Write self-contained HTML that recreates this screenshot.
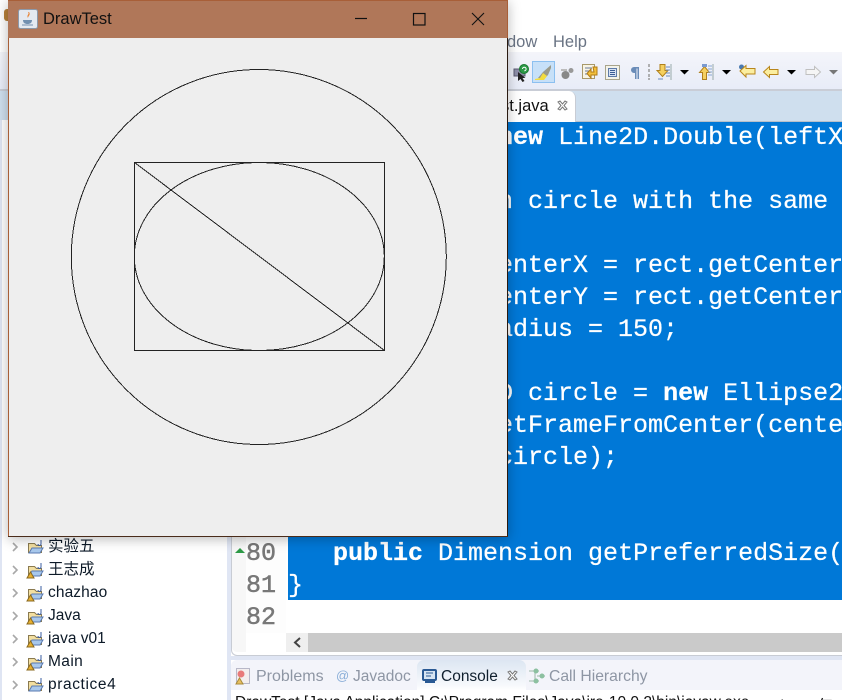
<!DOCTYPE html>
<html><head><meta charset="utf-8"><style>
html,body{margin:0;padding:0;width:842px;height:700px;overflow:hidden;background:#fff}
*{box-sizing:border-box}
.a{position:absolute}
.t{position:absolute;white-space:pre;font-family:"Liberation Sans","Noto Sans CJK SC",sans-serif}
.c{position:absolute;left:288px;white-space:pre;color:#fff;font:25px/32px "Liberation Mono",monospace;-webkit-text-stroke:.25px #fff}
.c b{font-weight:bold}
.n{position:absolute;left:246px;color:#787878;font:25px/32px "Liberation Mono",monospace;white-space:pre;-webkit-text-stroke:.5px #787878}
.tree{font-size:15.500px;color:#0d1a28;left:48px;line-height:20px}
</style></head><body>
<div class="a" style="left:0;top:0;width:842px;height:700px;background:#fff;overflow:hidden">
<!-- menu / toolbar -->
<div class="t" style="left:507px;top:33px;font-size:16.500px;color:#6a7484">dow</div>
<div class="t" style="left:553px;top:33px;font-size:16.500px;color:#6a7484">Help</div>
<div class="a" style="left:0;top:52px;width:842px;height:39px;background:linear-gradient(#f4f5fa,#e8ecf8);border-bottom:2px solid #c9cdd6"></div>
<div class="a" style="left:0;top:91px;width:842px;height:31px;background:#cfdfee;border-bottom:1px solid #b8c0ca"></div>
<div class="a" style="left:0;top:120px;width:2px;height:580px;background:#dfe5f3"></div>
<div class="a" style="left:2px;top:120px;width:225px;height:580px;background:#fff"></div>
<div class="a" style="left:227px;top:122px;width:4px;height:578px;background:#e0e6f4"></div>

<!-- toolbar icons -->
<svg class="a" style="left:0;top:0" width="842" height="92" viewBox="0 0 842 92">
<!-- green run icon -->
<path d="M514 69h11v7h-11z" fill="#8d8ea8" stroke="#5a5a70"/><path d="M518 72v9l2.500-2 2 3 2-1-2-3h3z" fill="#222"/><circle cx="524" cy="69" r="4.500" fill="#2c9a48" stroke="#1a7a30"/><path d="M522.500 69a1.800 1.800 0 1 1 1.800 1.800" fill="none" stroke="#fff"/>
<!-- highlighter -->
<rect x="532.500" y="61.500" width="22" height="21" fill="#c7e0f8" stroke="#8cc0f0"/><path d="M551 65l-8 7-5 6 6 1 4-4 3-7z" fill="#9a9a8a"/><path d="M535 79l5-1 3-5 4 3-3 4-9 0z" fill="#f2dc3e"/>
<!-- dots -->
<circle cx="565.500" cy="75" r="4" fill="#888"/><circle cx="571" cy="70.500" r="2.500" fill="#999"/><path d="M561 70h6" stroke="#bbb" stroke-width="2"/>
<!-- doc with return arrow -->
<rect x="582.500" y="64.500" width="12" height="14" fill="#f8f4e4" stroke="#a8996a"/><path d="M585 68h7M585 71h5M585 74h3" stroke="#6a7a9a"/><path d="M593 67h4v8h-6v3l-4-4.500 4-4.500v3h3z" fill="#f2c03c" stroke="#b07a14"/>
<!-- block -->
<rect x="605.500" y="65.500" width="14" height="14" fill="#f3f3ea" stroke="#a8a48c"/><path d="M608.500 68.500h8v8h-8z" fill="#d6e2f4" stroke="#5d7aa8"/><path d="M610 70.500h5M610 72.500h5M610 74.500h5" stroke="#3a5c94"/>
<!-- pilcrow -->
<path d="M639 67h-5a3 3 0 0 0 0 6h1v6h1.500V68.500h1V79h1.500z" fill="#6a8cb8"/>
<path d="M649 64v3M649 69v3M649 74v3M649 78v2" stroke="#999" stroke-width="1.500"/>
<!-- next annotation -->
<path d="M660 64.500h5v6h3l-5.500 6-5.500-6h3z" fill="#f5d060" stroke="#b0801c"/><path d="M658 79h5M666 67h4M666 70h4M666 73h4M666 76h4" stroke="#6a8cc0"/><path d="M671 64v16" stroke="#9aa"/>
<path d="M680 70h9l-4.500 4.500z" fill="#000"/>
<!-- prev annotation -->
<path d="M702.500 79.500v-7h-3l5-6 5 6h-3v7z" fill="#f5d060" stroke="#b0801c"/><path d="M702 64h5v3h-5z" fill="#7a9ad0"/><path d="M708 66h4M708 69h4M708 72h4M708 75h4" stroke="#8aa8d4"/><path d="M713 64v16" stroke="#9aa"/>
<path d="M722 70h9l-4.500 4.500z" fill="#000"/>
<!-- last edit -->
<circle cx="741.500" cy="67" r="2.500" fill="#4a7ab0"/><path d="M740 71l6-5.500v3h9v5.500h-9v3z" fill="#fbeea0" stroke="#b8861c"/>
<!-- back -->
<path d="M763.500 72l6-5.500v3h8.500v5h-8.500v3z" fill="#fbeea0" stroke="#b8861c"/>
<path d="M787 70h9l-4.500 4.500z" fill="#000"/>
<!-- forward -->
<path d="M820.500 72l-6-5.500v3H806v5h8.500v3z" fill="#f5f5f5" stroke="#c0c0c0"/>
<path d="M829 70h9l-4.500 4.500z" fill="#777"/>
</svg>
<!-- Tab -->
<div class="a" style="left:480px;top:91px;width:96px;height:31px;background:#fff;border-top-right-radius:7px;border-right:1px solid #c8ccd4"></div>
<div class="t" style="left:501px;top:97px;font-size:16.500px;color:#111">st.java</div>
<svg class="a" style="left:557px;top:100px" width="11" height="11"><path d="M1 2l2-1 2.500 3L8 1l2 1-3 3.500L10 9l-2 1-2.500-3L3 10 1 9l3-3.500z" fill="#fff" stroke="#777"/></svg>

<!-- Editor -->
<div class="a" style="left:231px;top:122px;width:611px;height:534px;background:#fff;border-left:1px solid #c8ccd4;border-bottom:1px solid #c8ccd4;border-bottom-left-radius:6px"></div>
<div class="a" style="left:232px;top:122px;width:14px;height:530px;background:#f7f7f7;border-bottom-left-radius:5px"></div>
<div class="a" style="left:246px;top:122px;width:40px;height:511px;background:#fdfdfd"></div>
<div class="a" style="left:288px;top:122px;width:554px;height:478px;background:#0078d7"></div>
<div class="c" style="top:122px"><span>              </span><b>new</b> Line2D.Double(leftX</div>
<div class="c" style="top:186px">              n circle with the same</div>
<div class="c" style="top:250px">             centerX = rect.getCenter</div>
<div class="c" style="top:282px">             centerY = rect.getCenter</div>
<div class="c" style="top:314px">              adius = 150;</div>
<div class="c" style="top:378px">              D circle = <b>new</b> Ellipse2</div>
<div class="c" style="top:410px">             setFrameFromCenter(cente</div>
<div class="c" style="top:442px">             (circle);</div>
<div class="c" style="top:538px">   <b>public</b> Dimension getPreferredSize(</div>
<div class="c" style="top:570px">}</div>
<div class="n" style="top:538px">80</div>
<div class="n" style="top:570px">81</div>
<div class="n" style="top:602px">82</div>
<svg class="a" style="left:235px;top:547px" width="10" height="7"><path d="M0 6L5 1l5 5z" fill="#2d9a46"/></svg>
<div class="a" style="left:286px;top:633px;width:22px;height:19px;background:#efefef"></div>
<svg class="a" style="left:291px;top:636px" width="12" height="13"><path d="M9 2L4 6.500 9 11" fill="none" stroke="#444" stroke-width="2"/></svg>
<div class="a" style="left:308px;top:633px;width:534px;height:19px;background:#cacaca"></div>

<!-- Tree -->
<svg class="a" style="left:0;top:537px" width="46" height="163">
<g fill="none" stroke="#a8a8a8" stroke-width="1.600"><path d="M13 6l4 4-4 4M13 29l4 4-4 4M13 52l4 4-4 4M13 75l4 4-4 4M13 98l4 4-4 4M13 121l4 4-4 4M13 144l4 4-4 4"/></g>
<g transform="translate(0 3)"><path d="M28.500 3.500h6l2 2h5v7h-13z" fill="#f3dfa0" stroke="#8a7a50"/><path d="M29 13l3-5h11l-3 5z" fill="#a8c8ec" stroke="#5a7ab0"/><path d="M41 0v4c0 2-3 2-3 0" fill="none" stroke="#3a5ca0"/></g>
<g transform="translate(0 26)"><path d="M28.500 3.500h6l2 2h5v7h-13z" fill="#f3dfa0" stroke="#8a7a50"/><path d="M29 13l3-5h11l-3 5z" fill="#a8c8ec" stroke="#5a7ab0"/><path d="M41 0v4c0 2-3 2-3 0" fill="none" stroke="#3a5ca0"/><path d="M27 15l3.500-6 3.500 6z" fill="#e8b030" stroke="#8a6a20"/></g>
<g transform="translate(0 49)"><path d="M28.500 3.500h6l2 2h5v7h-13z" fill="#f3dfa0" stroke="#8a7a50"/><path d="M29 13l3-5h11l-3 5z" fill="#a8c8ec" stroke="#5a7ab0"/><path d="M41 0v4c0 2-3 2-3 0" fill="none" stroke="#3a5ca0"/><path d="M27 15l3.500-6 3.500 6z" fill="#e8b030" stroke="#8a6a20"/></g>
<g transform="translate(0 72)"><path d="M28.500 3.500h6l2 2h5v7h-13z" fill="#f3dfa0" stroke="#8a7a50"/><path d="M29 13l3-5h11l-3 5z" fill="#a8c8ec" stroke="#5a7ab0"/><path d="M41 0v4c0 2-3 2-3 0" fill="none" stroke="#3a5ca0"/><path d="M27 15l3.500-6 3.500 6z" fill="#e8b030" stroke="#8a6a20"/></g>
<g transform="translate(0 95)"><path d="M28.500 3.500h6l2 2h5v7h-13z" fill="#f3dfa0" stroke="#8a7a50"/><path d="M29 13l3-5h11l-3 5z" fill="#a8c8ec" stroke="#5a7ab0"/><path d="M41 0v4c0 2-3 2-3 0" fill="none" stroke="#3a5ca0"/><path d="M27 15l3.500-6 3.500 6z" fill="#e8b030" stroke="#8a6a20"/></g>
<g transform="translate(0 118)"><path d="M28.500 3.500h6l2 2h5v7h-13z" fill="#f3dfa0" stroke="#8a7a50"/><path d="M29 13l3-5h11l-3 5z" fill="#a8c8ec" stroke="#5a7ab0"/><path d="M41 0v4c0 2-3 2-3 0" fill="none" stroke="#3a5ca0"/><path d="M27 15l3.500-6 3.500 6z" fill="#e8b030" stroke="#8a6a20"/></g>
<g transform="translate(0 141)"><path d="M28.500 3.500h6l2 2h5v7h-13z" fill="#f3dfa0" stroke="#8a7a50"/><path d="M29 13l3-5h11l-3 5z" fill="#a8c8ec" stroke="#5a7ab0"/><path d="M41 0v4c0 2-3 2-3 0" fill="none" stroke="#3a5ca0"/></g>
</svg>
<div class="t tree" style="top:537px">实验五</div>
<div class="t tree" style="top:560px">王志成</div>
<div class="t tree" style="top:583px;letter-spacing:.1px">chazhao</div>
<div class="t tree" style="top:606px">Java</div>
<div class="t tree" style="top:629px">java v01</div>
<div class="t tree" style="top:652px;letter-spacing:.4px">Main</div>
<div class="t tree" style="top:675px;letter-spacing:.6px">practice4</div>

<!-- Bottom view -->
<div class="a" style="left:231px;top:656px;width:611px;height:4px;background:#dfe5f3"></div>
<div class="a" style="left:231px;top:660px;width:611px;height:30px;background:#f3f4fa;border-radius:6px 0 0 0"></div>
<div class="a" style="left:231px;top:690px;width:611px;height:10px;background:#fff"></div>
<div class="a" style="left:417px;top:660px;width:109px;height:30px;background:linear-gradient(#dce6f2,#f7f9fc 85%,#fff);border-radius:7px 7px 0 0"></div>
<svg class="a" style="left:235px;top:667px" width="18" height="19"><rect x="1.500" y="1.500" width="13" height="15" fill="#f3eeee" stroke="#b8b8c8"/><circle cx="6" cy="7" r="3.500" fill="#e87a7a"/><path d="M1 17l3.500-6 3.500 6z" fill="#e8c060" stroke="#a88a3a"/></svg>
<div class="t" style="left:256px;top:668px;font-size:16px;color:#8e96a4">Problems</div>
<div class="t" style="left:336px;top:668px;font-size:13px;color:#8aaed8">@</div>
<div class="t" style="left:353px;top:668px;font-size:15.500px;color:#8e96a4">Javadoc</div>
<svg class="a" style="left:422px;top:669px" width="16" height="15"><rect x="1" y="1" width="13" height="10" rx="1" fill="#d6e4f2" stroke="#2a5a94" stroke-width="2"/><path d="M3 13h10" stroke="#2a5a94" stroke-width="2"/><path d="M4 4h7M4 7h5" stroke="#2a5a94"/></svg>
<div class="t" style="left:441px;top:668px;font-size:15.500px;color:#10202e">Console</div>
<svg class="a" style="left:507px;top:670px" width="11" height="11"><path d="M1 2l2-1 2.500 3L8 1l2 1-3 3.500L10 9l-2 1-2.500-3L3 10 1 9l3-3.500z" fill="#fff" stroke="#777"/></svg>
<svg class="a" style="left:529px;top:668px" width="18" height="17"><path d="M0 3h10M0 13h10M6 3v10M8 8h8" stroke="#9cb8a8"/><circle cx="7" cy="3" r="2.500" fill="#8cc0a0"/><circle cx="7" cy="13" r="2.500" fill="#8cc0a0"/><circle cx="13" cy="8" r="2.500" fill="#8cc0a0"/></svg>
<div class="t" style="left:549px;top:668px;font-size:15.700px;color:#8e96a4">Call Hierarchy</div>
<div class="t" style="left:235px;top:694px;font-size:15.500px;color:#111">DrawTest [Java Application] C:\Program Files\Java\jre-10.0.2\bin\javaw.exe</div>
<div class="t" style="left:778px;top:694px;font-size:15.500px;color:#111">(2018年1</div>

<!-- Orange bit peeking -->
<div class="a" style="left:4px;top:9px;width:4px;height:12px;background:#b8813a;border-radius:3px 0 0 3px"></div>

<!-- Window shadow -->
<div class="a" style="left:8px;top:0;width:500px;height:537px;box-shadow:0 2px 12px rgba(0,0,0,.28)"></div>
<!-- Window -->
<div class="a" style="left:8px;top:0;width:500px;height:537px;background:#eeeeee;border-left:1px solid #a85f38"></div>
<div class="a" style="left:8px;top:0;width:500px;height:38px;background:#b07759;border-top:1px solid #a85f38;border-right:1px solid #a85f38"></div>
<div class="a" style="left:507px;top:38px;width:1px;height:499px;background:#2a1a10"></div>
<div class="a" style="left:8px;top:536px;width:500px;height:1px;background:#4a2c1a"></div>
<svg class="a" style="left:18px;top:9px" width="20" height="20"><rect x=".5" y=".5" width="19" height="19" rx="2" fill="#e4e9f0" stroke="#8c99aa"/><path d="M10 3c2 2-2 3 0 6 0-2 3-3 1-6z" fill="#e8863a"/><path d="M5 11h9c0 3-2 4-4.500 4S5 14 5 11z" fill="#7290b0"/><path d="M4 16h11" stroke="#7290b0"/></svg>
<div class="t" style="left:43px;top:10px;font-size:16.500px;color:#111">DrawTest</div>
<svg class="a" style="left:300px;top:0" width="208" height="38"><path d="M55 18.500h12" stroke="#111" stroke-width="1.200"/><rect x="113.500" y="13.500" width="11.500" height="11.500" fill="none" stroke="#111" stroke-width="1.200"/><path d="M172 13l12 12M184 13l-12 12" stroke="#111" stroke-width="1.100"/></svg>
<svg class="a" style="left:9px;top:38px" width="498" height="498" viewBox="9 38 498 498">
<g fill="none" stroke="#222" stroke-width="1" shape-rendering="crispEdges">
<circle cx="258.800" cy="257" r="187.500"/>
<rect x="134.500" y="162.500" width="250" height="188"/>
<ellipse cx="259.300" cy="256.500" rx="125" ry="94"/>
<path d="M134.500 162.500L384.500 350.500"/>
</g></svg>
</div>
</body></html>
